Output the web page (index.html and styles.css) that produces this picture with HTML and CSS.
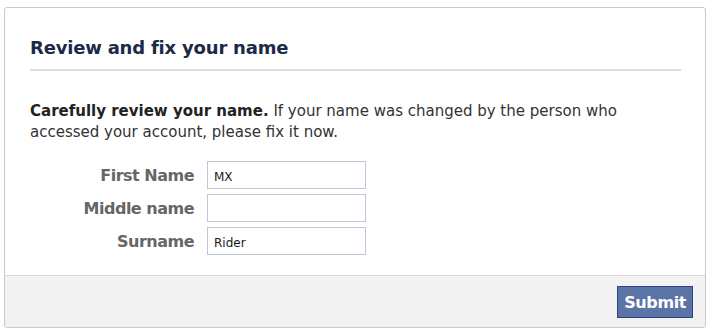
FILE: index.html
```html
<!DOCTYPE html>
<html>
<head>
    <meta charset="utf-8">
    <link rel="stylesheet" href="styles.css">
</head>
<body>
    <div class="card">
        <div class="card-body">
            <h2 class="card-title">Review and fix your name</h2>
            <p class="intro"><b>Carefully review your name.</b> If your name was changed by the person who accessed your account, please fix it now.</p>

            <div class="name-form">
                <label class="field-label" for="first-name">First Name</label>
                <input class="field-input" id="first-name" type="text" value="MX">

                <label class="field-label" for="middle-name">Middle name</label>
                <input class="field-input" id="middle-name" type="text" value="">

                <label class="field-label" for="surname">Surname</label>
                <input class="field-input" id="surname" type="text" value="Rider">
            </div>
        </div>

        <div class="card-footer">
            <button class="submit-btn" type="button">Submit</button>
        </div>
    </div>
</body>
</html>
```

FILE: styles.css
```css
body {
    margin: 0;
    background: white;
    font-family: "DejaVu Sans", Verdana, sans-serif;
}

.card {
    margin: 7px 6px 0 4px;
    border: 1px solid #c9c9c9;
    border-radius: 3px;
    background: white;
}

.card-body {
    padding: 0 24px 20px 25px;
}

.card-title {
    margin: 0;
    padding: 29px 0 11px 0;
    border-bottom: 2px solid #dddddd;
    font-size: 18px;
    font-weight: bold;
    color: #1c2a47;
    letter-spacing: -0.2px;
}

.intro {
    margin: 30px 0 18px 0;
    font-size: 15px;
    line-height: 21px;
    color: #333333;
}

.intro b {
    color: #222222;
}

.name-form {
    display: grid;
    grid-template-columns: 164px 159px;
    column-gap: 13px;
    row-gap: 5px;
    align-items: center;
}

.field-label {
    text-align: right;
    font-size: 16px;
    font-weight: bold;
    color: #666666;
    letter-spacing: -0.5px;
}

.field-input {
    box-sizing: border-box;
    width: 159px;
    height: 28px;
    margin: 0;
    padding: 3px 6px 0 6px;
    border: 1px solid #bdc7d8;
    font-family: "DejaVu Sans", Verdana, sans-serif;
    font-size: 12px;
    color: #1a1a1a;
    background: white;
}

.card-footer {
    display: flex;
    justify-content: flex-end;
    padding: 10px 12px 9px 12px;
    border-top: 1px solid #d8d8d8;
    background: #f2f2f2;
    border-radius: 0 0 3px 3px;
}

.submit-btn {
    height: 32px;
    padding: 0 6px;
    border: 1px solid #29447e;
    background: #5b74a8;
    color: white;
    font-family: "DejaVu Sans", Verdana, sans-serif;
    font-size: 16px;
    font-weight: bold;
    letter-spacing: -0.4px;
    cursor: pointer;
}
```
